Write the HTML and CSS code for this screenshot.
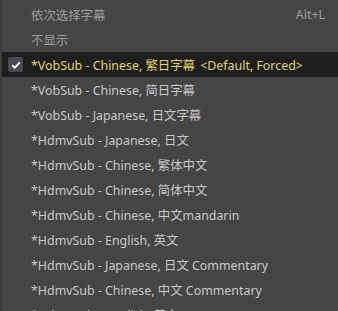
FILE: index.html
```html
<!DOCTYPE html>
<html>
<head>
<meta charset="utf-8">
<link rel="stylesheet" href="styles.css">
</head>
<body>
<div class="menu">
  <div class="item dim"><span class="check"></span><span class="label">依次选择字幕</span><span class="key">Alt+L</span></div>
  <div class="item dim"><span class="check"></span><span class="label">不显示</span></div>
  <div class="item active"><span class="check"><span class="box"><svg width="10" height="8" viewBox="0 0 10 8"><path d="M1.2 4.2 L3.8 6.6 L8.8 1.4" fill="none" stroke="#fff" stroke-width="1.9"/></svg></span></span><span class="label">*VobSub - Chinese, 繁日字幕 <span class="flags">&lt;Default, Forced&gt;</span></span></div>
  <div class="item"><span class="check"></span><span class="label">*VobSub - Chinese, 简日字幕</span></div>
  <div class="item"><span class="check"></span><span class="label">*VobSub - Japanese, 日文字幕</span></div>
  <div class="item"><span class="check"></span><span class="label">*HdmvSub - Japanese, 日文</span></div>
  <div class="item"><span class="check"></span><span class="label">*HdmvSub - Chinese, 繁体中文</span></div>
  <div class="item"><span class="check"></span><span class="label">*HdmvSub - Chinese, 简体中文</span></div>
  <div class="item"><span class="check"></span><span class="label">*HdmvSub - Chinese, 中文mandarin</span></div>
  <div class="item"><span class="check"></span><span class="label">*HdmvSub - English, 英文</span></div>
  <div class="item"><span class="check"></span><span class="label">*HdmvSub - Japanese, 日文 Commentary</span></div>
  <div class="item"><span class="check"></span><span class="label">*HdmvSub - Chinese, 中文 Commentary</span></div>
  <div class="item"><span class="check"></span><span class="label">*HdmvSub - English, 英文 Commentary</span></div>
</div>
</body>
</html>
```
FILE: styles.css
```css
html, body {
  margin: 0;
  padding: 0;
  background: #454545;
  overflow: hidden;
}
.menu {
  width: 338px;
  height: 311px;
  box-sizing: border-box;
  border-left: 2px solid #3c3c3c;
  padding-top: 2px;
  background: #454545;
  font-family: "Noto Sans", "Noto Sans CJK SC", sans-serif;
  font-size: 12.4px;
  color: #c9c9c9;
  overflow: hidden;
}
.item {
  display: flex;
  align-items: center;
  height: 25px;
  padding-right: 13px;
  white-space: nowrap;
}
.item.dim {
  color: #9e9e9e;
}
.item.active {
  background: #1e1e1e;
  color: #e0d85c;
}
.flags {
  margin-left: 2px;
}
.check {
  width: 29px;
  flex: none;
  display: flex;
  align-items: center;
  padding-left: 6px;
  box-sizing: border-box;
}
.box {
  width: 15px;
  height: 15px;
  background: #4a4a55;
  border-radius: 2px;
  display: flex;
  align-items: center;
  justify-content: center;
}
.label {
  flex: 1;
}
.key {
  flex: none;
}
```
